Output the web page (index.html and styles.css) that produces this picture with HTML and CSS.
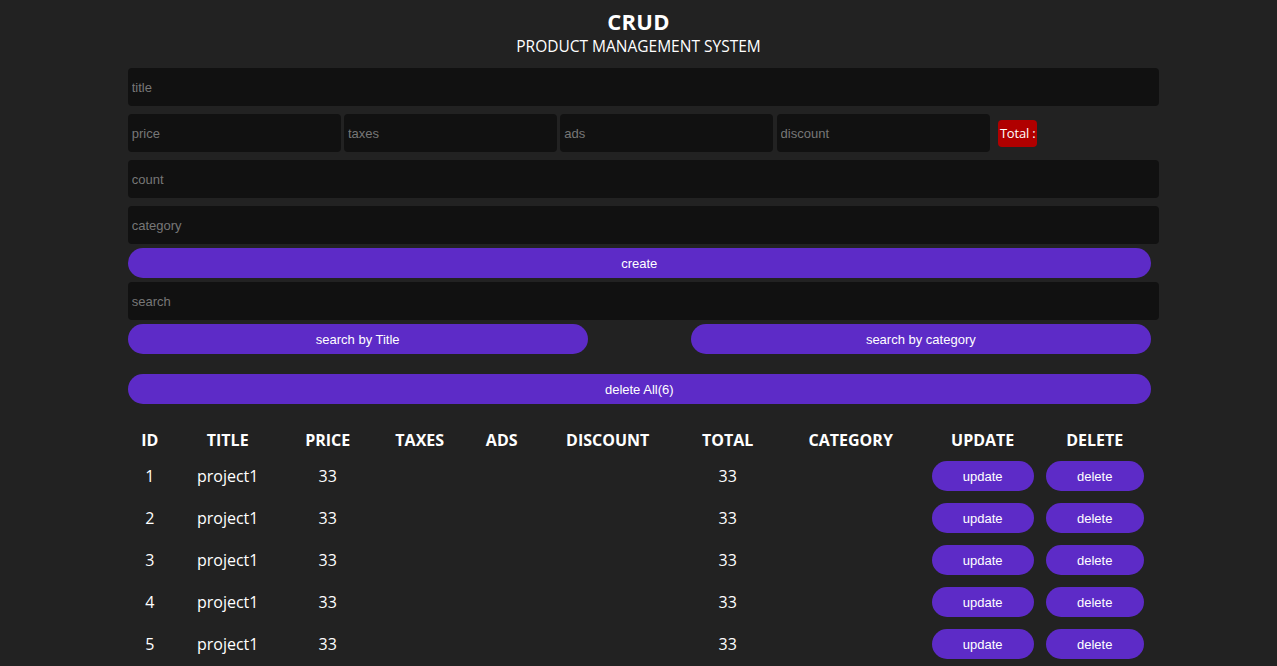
FILE: index.html
```html
<!DOCTYPE html>
<html lang="en">
<head>
<meta charset="utf-8">
<title>CRUD</title>
<link rel="stylesheet" href="styles.css">
</head>
<body>
<div class="crud">
  <div class="head">
    <h2 class="head-title">CRUD</h2>
    <p class="head-sub">PRODUCT MANAGEMENT SYSTEM</p>
  </div>
  <div class="inputs">
    <input class="field" type="text" placeholder="title">
    <div class="price">
      <input class="field small" type="number" placeholder="price">
      <input class="field small" type="number" placeholder="taxes">
      <input class="field small" type="number" placeholder="ads">
      <input class="field small" type="number" placeholder="discount">
      <span class="total">Total :</span>
    </div>
    <input class="field" type="number" placeholder="count">
    <input class="field" type="text" placeholder="category">
  </div>
  <button class="btn wide create">create</button>
  <div class="search-block">
    <input class="field" type="text" placeholder="search">
    <div class="search-btns">
      <button class="btn half">search by Title</button>
      <button class="btn half">search by category</button>
    </div>
  </div>
  <button class="btn wide delete-all">delete All(6)</button>
  <table class="outputs">
    <thead>
      <tr>
        <th class="c-id">ID</th>
        <th class="c-title">TITLE</th>
        <th class="c-price">PRICE</th>
        <th class="c-taxes">TAXES</th>
        <th class="c-ads">ADS</th>
        <th class="c-discount">DISCOUNT</th>
        <th class="c-total">TOTAL</th>
        <th class="c-category">CATEGORY</th>
        <th class="c-update">UPDATE</th>
        <th class="c-delete">DELETE</th>
      </tr>
    </thead>
    <tbody>
      <tr><td>1</td><td>project1</td><td>33</td><td></td><td></td><td></td><td>33</td><td></td><td><button class="btn row-btn">update</button></td><td><button class="btn row-btn">delete</button></td></tr>
      <tr><td>2</td><td>project1</td><td>33</td><td></td><td></td><td></td><td>33</td><td></td><td><button class="btn row-btn">update</button></td><td><button class="btn row-btn">delete</button></td></tr>
      <tr><td>3</td><td>project1</td><td>33</td><td></td><td></td><td></td><td>33</td><td></td><td><button class="btn row-btn">update</button></td><td><button class="btn row-btn">delete</button></td></tr>
      <tr><td>4</td><td>project1</td><td>33</td><td></td><td></td><td></td><td>33</td><td></td><td><button class="btn row-btn">update</button></td><td><button class="btn row-btn">delete</button></td></tr>
      <tr><td>5</td><td>project1</td><td>33</td><td></td><td></td><td></td><td>33</td><td></td><td><button class="btn row-btn">update</button></td><td><button class="btn row-btn">delete</button></td></tr>
    </tbody>
  </table>
</div>
</body>
</html>
```

FILE: styles.css
```css
* {
  box-sizing: border-box;
}

html, body {
  margin: 0;
  padding: 0;
  background: #222222;
  color: #ffffff;
  font-family: "Open Sans", "Noto Sans", sans-serif;
}

body {
  overflow: hidden;
}

.crud {
  width: 80%;
  margin: 0 auto;
}

.head {
  text-align: center;
  padding-top: 6px;
  margin-bottom: 12px;
}

.head-title {
  margin: 0;
  font-size: 22px;
  font-weight: 700;
  line-height: 30px;
  letter-spacing: 0.3px;
}

.head-sub {
  margin: 0;
  font-size: 15.5px;
  line-height: 20px;
  font-weight: 400;
}

.inputs {
  display: flex;
  flex-direction: column;
  gap: 8px;
}

.field {
  display: block;
  width: calc(100% + 9.5px);
  height: 38px;
  padding: 0 4px;
  border: none;
  border-radius: 4px;
  outline: none;
  background: #111111;
  color: #ffffff;
  font-family: "Liberation Sans", Arial, sans-serif;
  font-size: 13px;
}

.field::placeholder {
  color: #777777;
}

.field::-webkit-outer-spin-button,
.field::-webkit-inner-spin-button {
  -webkit-appearance: none;
  margin: 0;
}

.price {
  display: flex;
  align-items: center;
  gap: 3.3px;
}

.field.small {
  width: 213px;
  flex: none;
}

.total {
  margin-left: 5px;
  background: #b00000;
  color: #ffffff;
  border-radius: 4px;
  padding: 0 2px;
  height: 27px;
  line-height: 27px;
  font-size: 13px;
  letter-spacing: -0.2px;
  font-family: "Open Sans", "Noto Sans", sans-serif;
}

.btn {
  display: block;
  border: none;
  background: #5d2bc7;
  color: #ffffff;
  font-family: "Liberation Sans", Arial, sans-serif;
  font-size: 13px;
  height: 30px;
  border-radius: 15px;
  cursor: pointer;
  padding: 0;
}

.wide {
  width: calc(100% + 1.5px);
}

.create {
  margin-top: 4px;
}

.search-block {
  margin-top: 4px;
}

.search-btns {
  display: flex;
  justify-content: space-between;
  width: calc(100% + 1.5px);
  margin-top: 4px;
}

.half {
  width: 460px;
}

.delete-all {
  margin-top: 20px;
}

.outputs {
  width: 100%;
  table-layout: fixed;
  border-collapse: collapse;
  margin-top: 20px;
  text-align: center;
}

.outputs th {
  font-size: 16px;
  font-weight: 700;
  height: 31px;
  padding: 0;
  vertical-align: middle;
}

.outputs td {
  font-size: 16px;
  height: 42px;
  padding: 0 6px;
  vertical-align: middle;
}

.c-id { width: 44px; }
.c-title { width: 112px; }
.c-price { width: 88px; }
.c-taxes { width: 96px; }
.c-ads { width: 68px; }
.c-discount { width: 144px; }
.c-total { width: 96px; }
.c-category { width: 150px; }
.c-update { width: 114px; }
.c-delete { width: 110px; }

.row-btn {
  width: 100%;
}
```
